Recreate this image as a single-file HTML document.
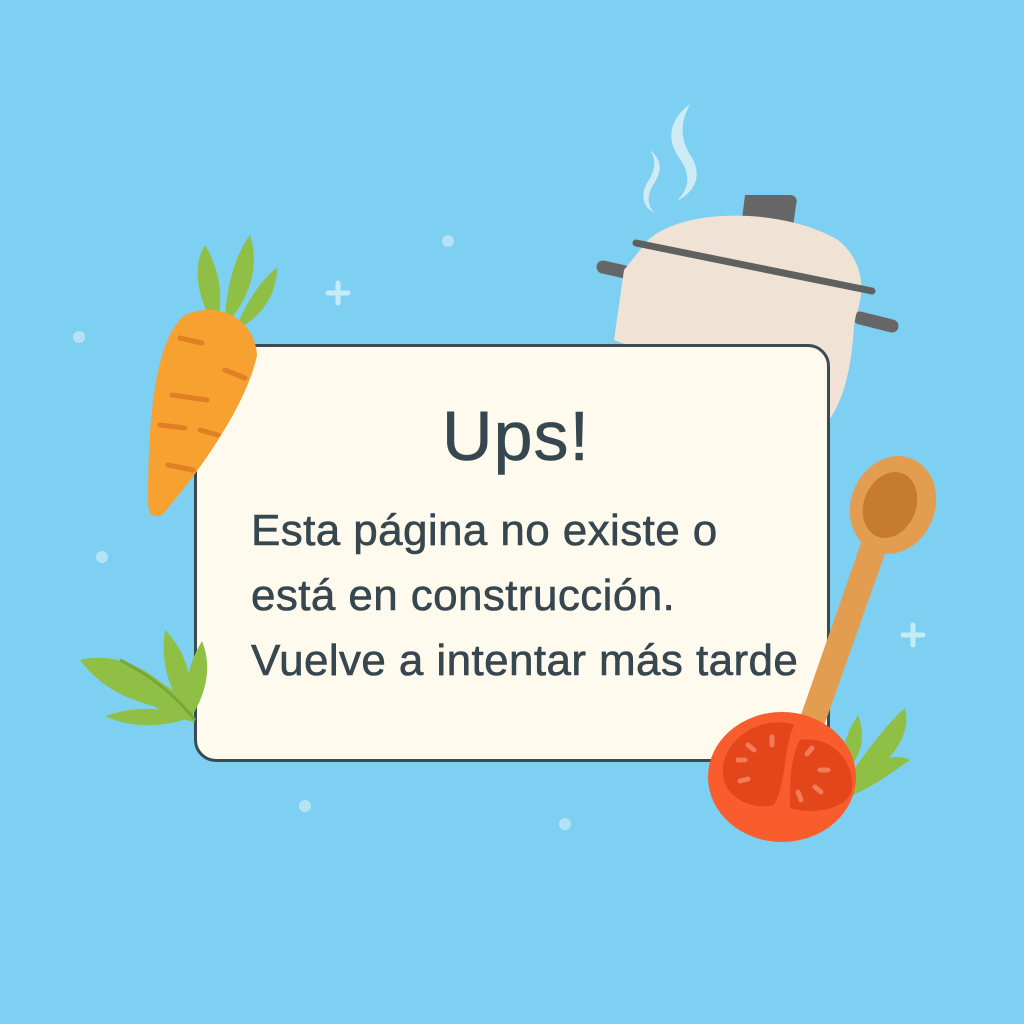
<!DOCTYPE html>
<html><head><meta charset="utf-8"><style>
html,body{margin:0;padding:0;width:1024px;height:1024px;overflow:hidden;background:#7dd0f2;font-family:"Liberation Sans",sans-serif}
.card{position:absolute;left:194px;top:344px;width:630px;height:412px;background:#fffaee;border:3px solid #3c4a52;border-radius:22px}
.t{position:absolute;color:#37474f;white-space:nowrap;-webkit-text-stroke:0.6px #37474f}
svg{position:absolute;left:0;top:0}
</style></head><body>
<svg width="1024" height="1024" viewBox="0 0 1024 1024">
 <g fill="#b5e3f5"><circle cx="448" cy="241" r="6"/><circle cx="79" cy="337" r="6"/><circle cx="102" cy="557" r="6"/><circle cx="305" cy="806" r="6"/><circle cx="565" cy="824" r="6"/></g>
 <g stroke="#c5ebf7" stroke-width="5" stroke-linecap="round"><path d="M338 283v20M328 293h20M913 625v20M903 635h20"/></g>
 <g fill="#cdebf3"><path d="M690 104c-20 15-25 35-10 55 12 18 8 30-3 42 20-10 25-28 14-45-12-18-10-35-1-52z"/><path d="M650 150c15 12 10 25 3 35-7 12-5 22 2 28-12-5-15-18-8-30 8-12 10-22 3-33z"/></g>
 <path d="M603 267l40 9" stroke="#666" stroke-width="13" stroke-linecap="round"/>
 <path d="M860 318l32 8" stroke="#666" stroke-width="13" stroke-linecap="round"/>
 <path d="M745 195h45c6 0 8 5 6 10l-3 22h-52z" fill="#666"/>
 <path d="M648 240c40-35 140-30 190 0 25 20 28 50 18 75l-2 10c-2 40-10 75-25 95l-215-80 10-70z" fill="#f0e3d5"/>
 <path d="M636 243l236 48" stroke="#5f6060" stroke-width="7" stroke-linecap="round"/>
</svg>
<div class="card"></div>
<div class="t" style="left:0;width:1032px;text-align:center;top:396px;font-size:70px;letter-spacing:1px">Ups!</div>
<div class="t" style="left:251px;top:498px;font-size:44px;line-height:65px;letter-spacing:0.4px">Esta página no existe o<br>está en construcción.<br>Vuelve a intentar más tarde</div>
<svg width="1024" height="1024" viewBox="0 0 1024 1024">
 <g fill="#8fbf45"><path d="M195 722c-30-5-60-25-80-50 40 0 70 20 80 50z"/><path d="M190 715c-40-10-80-15-110-55 40-10 85 15 110 55z"/><path d="M190 718c-30 10-60 10-85-2 30-10 60-10 85 2z"/><path d="M190 715c-20-20-30-50-25-85 20 20 30 50 25 85z"/><path d="M192 716c-10-25-5-50 10-75 10 25 5 50-10 75z"/></g>
 <path d="M120 660c30 15 55 35 75 60" stroke="#7aa63a" stroke-width="3" fill="none"/>
 <g fill="#8fbf45"><path d="M215 330c-15-30-25-60-10-85 15 25 20 55 10 85z"/><path d="M225 325c0-35 10-70 25-90 10 30 0 65-25 90z"/><path d="M235 330c10-25 25-50 42-62 0 25-15 50-42 62z"/></g>
 <path d="M185 315c35-15 70 5 72 40-10 50-60 120-95 160-12 5-14-5-14-15 0-70 5-160 37-185z" fill="#f7a230"/>
 <g stroke="#e07f24" stroke-width="5" stroke-linecap="round"><path d="M180 338l22 5M225 370l20 8M172 395l35 5M160 425l25 3M200 430l18 5M168 465l25 5"/></g>
 <g fill="#8fbf45"><path d="M840 800c30-10 55-30 70-40-20-10-50 5-70 40z"/><path d="M840 790c20-30 45-65 65-82 8 30-20 65-65 82z"/><path d="M838 780c0-25 10-50 20-65 8 20 5 45-20 65z"/></g>
 <path d="M862 540l25 8-68 192-24-8z" fill="#e39d50"/>
 <ellipse cx="893" cy="505" rx="42" ry="50" transform="rotate(22 893 505)" fill="#e39d50"/>
 <ellipse cx="890" cy="505" rx="26" ry="34" transform="rotate(22 890 505)" fill="#c77b2e"/>
 <ellipse cx="782" cy="777" rx="74" ry="65" fill="#fa5d2d"/>
 <path d="M732 745c20-25 50-25 62-20-10 20-8 60-20 80-20 5-45-5-50-25-3-12 0-25 8-35z" fill="#e2461a"/>
 <path d="M800 740c30-5 55 20 52 50-5 20-40 25-62 18 0-25 0-50 10-68z" fill="#e2461a"/>
 <g stroke="#f37b56" stroke-width="5" stroke-linecap="round"><path d="M748 745l6 5M772 737v8M738 760h7M740 781l8-2M812 748l-5 6M820 770h8M815 787l6 5M798 792l3 8"/></g>
</svg>
</body></html>
